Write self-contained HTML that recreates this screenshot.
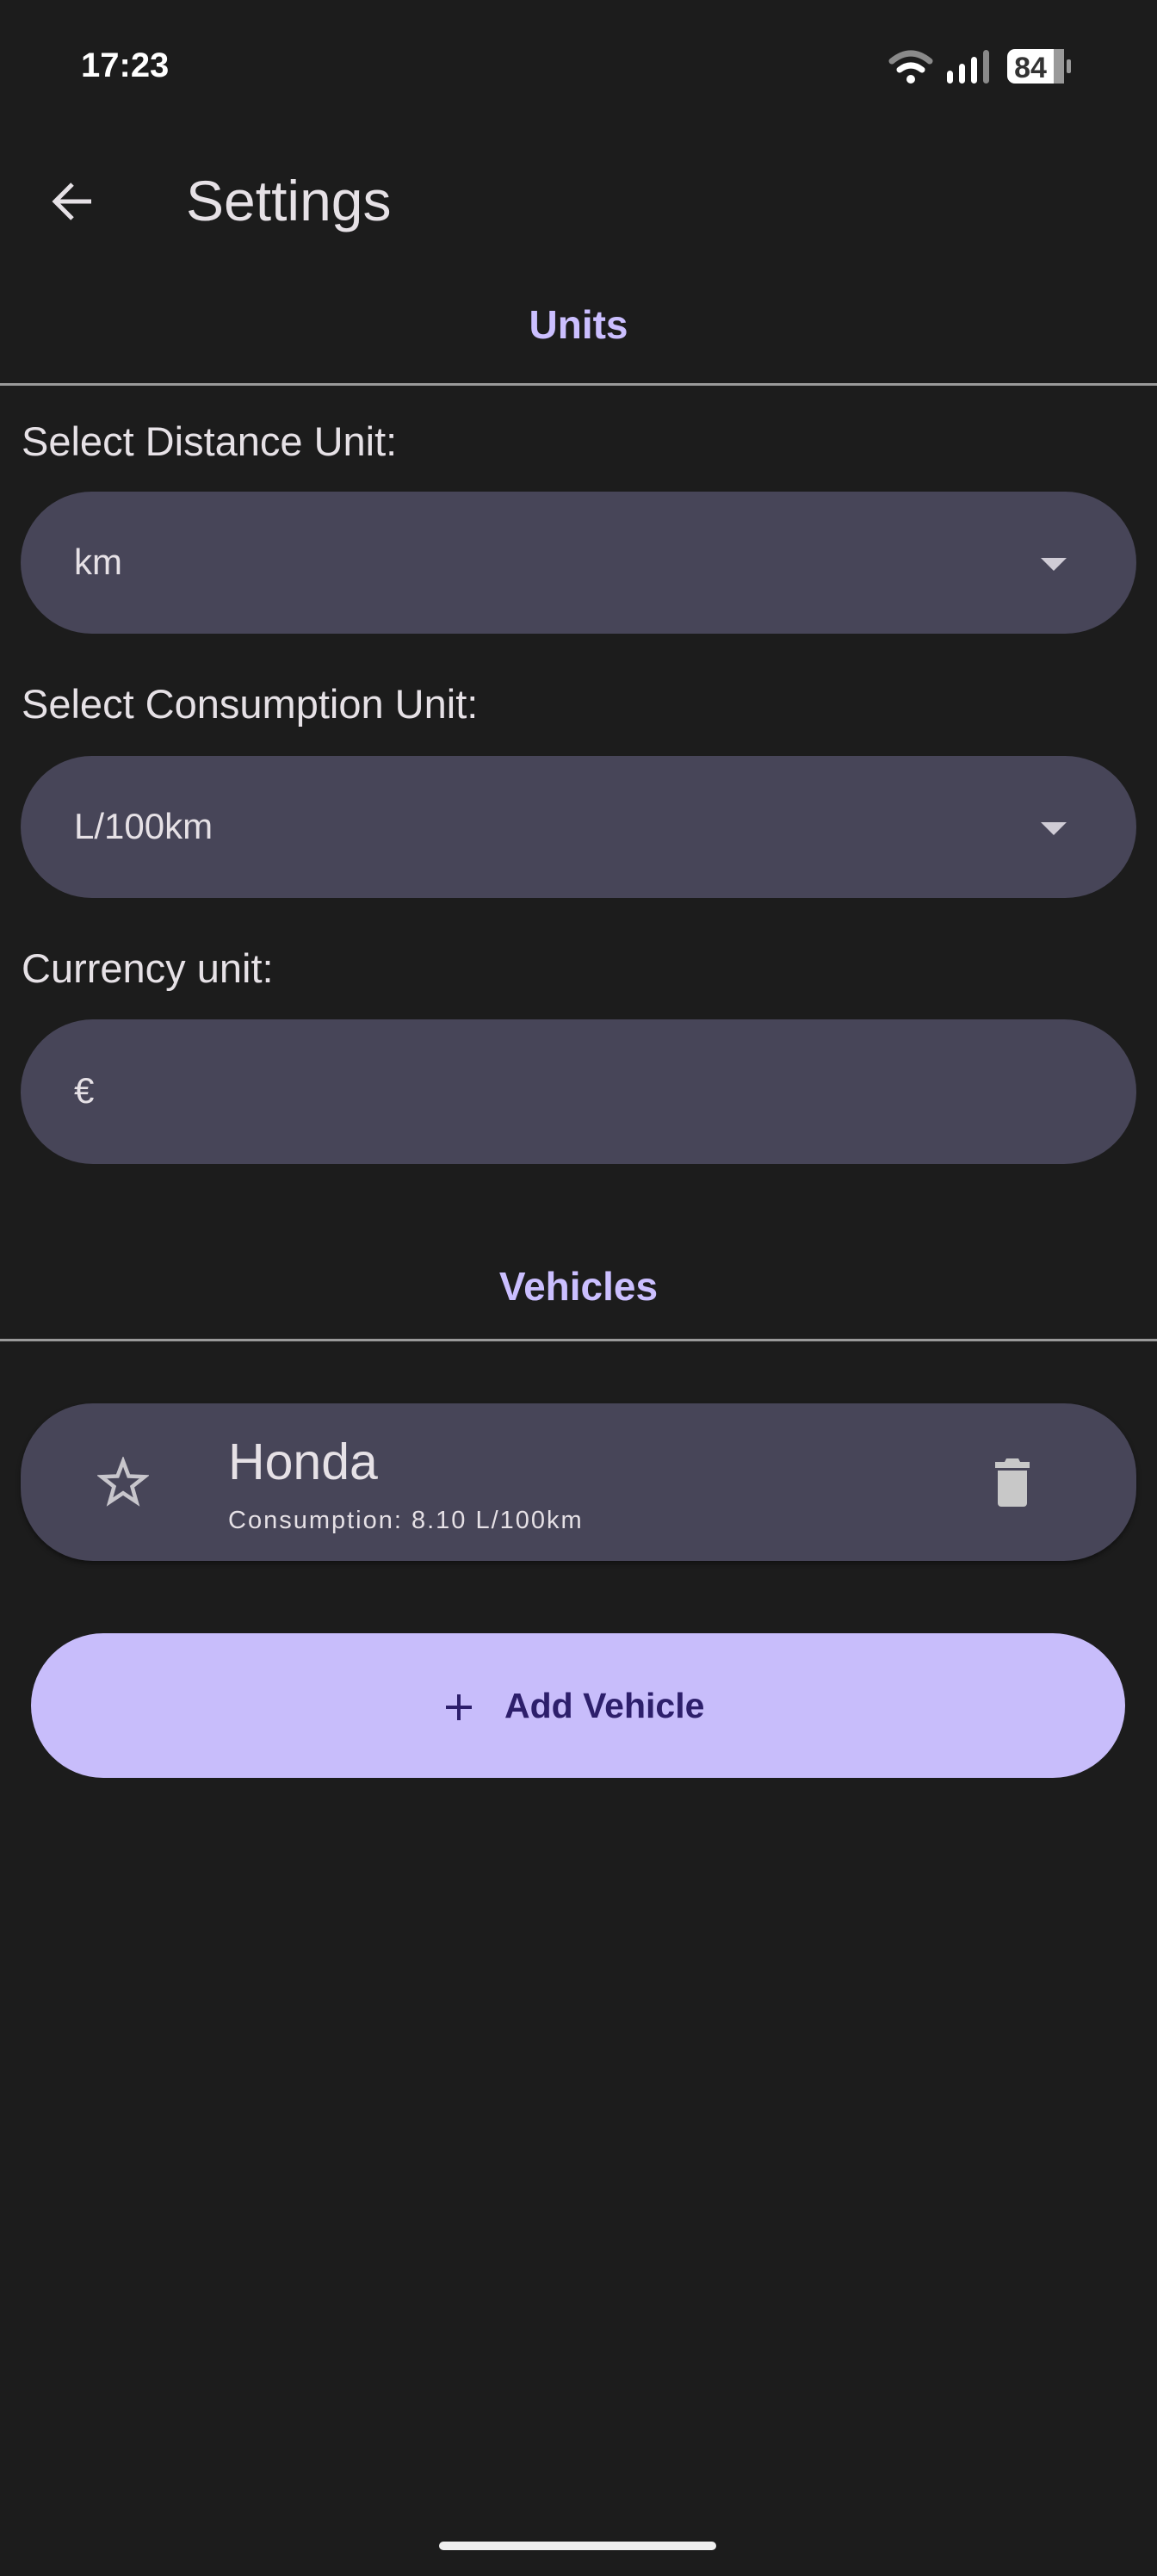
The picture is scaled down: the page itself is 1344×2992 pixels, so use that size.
<!DOCTYPE html>
<html><head><meta charset="utf-8"><style>
*{margin:0;padding:0;box-sizing:border-box}
body{width:1344px;height:2992px;background:#1c1c1c;position:relative;overflow:hidden;font-family:"Liberation Sans",Roboto,sans-serif;color:#e6e1e6}
.a{position:absolute;line-height:1;white-space:nowrap}
.f{position:absolute;left:24px;width:1296px;border-radius:84px;background:#474558}
.div{position:absolute;left:0;width:1344px;height:3px;background:#9a9a9a}
.tri{position:absolute;width:0;height:0;border-left:15px solid transparent;border-right:15px solid transparent;border-top:15px solid #d0ccd6}
</style></head><body>
<div class="a" style="left:94px;top:56px;font-size:40px;font-weight:bold;color:#fff">17:23</div>
<svg class="a" style="left:1030px;top:55px" width="230" height="45" viewBox="0 0 230 45">
<path d="M6 16 Q28 -2 50 16" stroke="#8a8a8a" stroke-width="7" fill="none" stroke-linecap="round"/>
<path d="M15 26 Q28 16 41 26" stroke="#fff" stroke-width="7" fill="none" stroke-linecap="round"/>
<circle cx="28" cy="37" r="5" fill="#fff"/>
<rect x="70" y="27" width="7" height="15" rx="3.5" fill="#fff"/>
<rect x="84" y="19" width="7" height="23" rx="3.5" fill="#fff"/>
<rect x="98" y="11" width="7" height="31" rx="3.5" fill="#fff"/>
<rect x="112" y="3" width="7" height="39" rx="3.5" fill="#8a8a8a"/>
<rect x="140" y="2" width="66" height="40" rx="9" fill="#fff"/>
<rect x="194" y="2" width="12" height="40" fill="#999"/>
<rect x="209" y="14" width="5" height="16" rx="2" fill="#999"/>
<text x="167" y="35" font-family="Liberation Sans" font-size="34" font-weight="bold" fill="#333" text-anchor="middle">84</text>
</svg>
<svg class="a" style="left:58px;top:210px" width="52" height="48" viewBox="0 0 52 48"><path d="M48 24H6M26 4L6 24l20 20" stroke="#e6e1e6" stroke-width="5" fill="none"/></svg>
<div class="a" style="left:216px;top:200px;font-size:66px">Settings</div>
<div class="a" style="left:0;width:1344px;text-align:center;top:354px;font-size:46px;font-weight:bold;color:#cbbfff">Units</div>
<div class="div" style="top:445px"></div>
<div class="a" style="left:25px;top:489px;font-size:47px">Select Distance Unit:</div>
<div class="f" style="top:571px;height:165px"></div>
<div class="a" style="left:86px;top:632px;font-size:42px">km</div>
<div class="tri" style="left:1209px;top:648px"></div>
<div class="a" style="left:25px;top:794px;font-size:47px">Select Consumption Unit:</div>
<div class="f" style="top:878px;height:165px"></div>
<div class="a" style="left:86px;top:939px;font-size:42px">L/100km</div>
<div class="tri" style="left:1209px;top:955px"></div>
<div class="a" style="left:25px;top:1101px;font-size:47px">Currency unit:</div>
<div class="f" style="top:1184px;height:168px"></div>
<div class="a" style="left:86px;top:1246px;font-size:42px">€</div>
<div class="a" style="left:0;width:1344px;text-align:center;top:1471px;font-size:46px;font-weight:bold;color:#cbbfff">Vehicles</div>
<div class="div" style="top:1555px"></div>
<div class="f" style="top:1630px;height:183px;box-shadow:0 3px 6px rgba(0,0,0,.4)"></div>
<svg class="a" style="left:113px;top:1692px" width="60" height="58" viewBox="0 0 24 23"><path d="M12 2l2.6 6.9 7.4.3-5.8 4.6 2 7.1L12 16.8l-6.2 4.1 2-7.1L2 9.2l7.4-.3z" stroke="#c8c6cc" stroke-width="1.8" fill="none" stroke-linejoin="miter"/></svg>
<div class="a" style="left:265px;top:1669px;font-size:59px">Honda</div>
<div class="a" style="left:265px;top:1752px;font-size:29px;letter-spacing:2px">Consumption: 8.10 L/100km</div>
<svg class="a" style="left:1156px;top:1694px" width="40" height="56" viewBox="0 0 40 56"><path d="M13 0h14l2 4h11v7H0V4h11z" fill="#c8c8c8"/><path d="M3 14h34v38a4 4 0 0 1-4 4H7a4 4 0 0 1-4-4z" fill="#c8c8c8"/></svg>
<div class="a" style="left:36px;top:1897px;width:1271px;height:168px;border-radius:84px;background:#c8bdfb"></div>
<svg class="a" style="left:516px;top:1966px" width="34" height="34" viewBox="0 0 34 34"><path d="M17 2v30M2 17h30" stroke="#2d1f6b" stroke-width="4"/></svg>
<div class="a" style="left:586px;top:1961px;font-size:41px;font-weight:bold;color:#2d1f6b">Add Vehicle</div>
<div class="a" style="left:510px;top:2952px;width:322px;height:10px;border-radius:5px;background:#f0f0f0"></div>
</body></html>
